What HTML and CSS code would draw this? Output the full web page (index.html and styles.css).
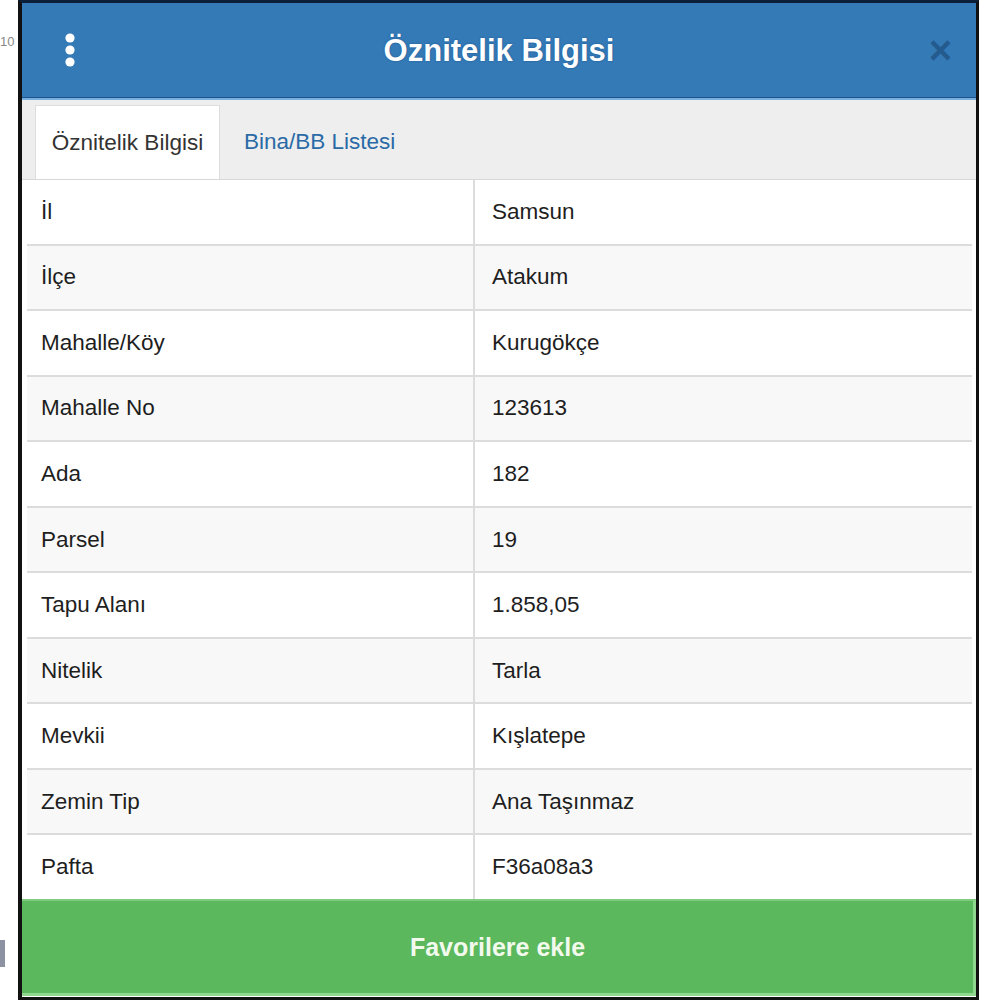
FILE: index.html
```html
<!DOCTYPE html>
<html lang="tr">
<head>
<meta charset="utf-8">
<title>Öznitelik Bilgisi</title>
<link rel="stylesheet" href="styles.css">
</head>
<body>
<div class="page">
  <span class="behind-num">10</span>
  <span class="behind-block"></span>
  <div class="dialog">
    <header class="header">
      <div class="menu">
        <svg width="12" height="36" viewBox="0 0 12 36" aria-hidden="true">
          <circle cx="6" cy="5" r="4.6" fill="#fff"/>
          <circle cx="6" cy="17" r="4.6" fill="#fff"/>
          <circle cx="6" cy="29" r="4.6" fill="#fff"/>
        </svg>
      </div>
      <h1 class="title">Öznitelik Bilgisi</h1>
      <div class="close">×</div>
    </header>
    <nav class="tabs">
      <div class="tab active">Öznitelik Bilgisi</div>
      <div class="tab link">Bina/BB Listesi</div>
    </nav>
    <div class="table">
      <div class="row"><div class="cell key">İl</div><div class="cell val">Samsun</div></div>
      <div class="row"><div class="cell key">İlçe</div><div class="cell val">Atakum</div></div>
      <div class="row"><div class="cell key">Mahalle/Köy</div><div class="cell val">Kurugökçe</div></div>
      <div class="row"><div class="cell key">Mahalle No</div><div class="cell val">123613</div></div>
      <div class="row"><div class="cell key">Ada</div><div class="cell val">182</div></div>
      <div class="row"><div class="cell key">Parsel</div><div class="cell val">19</div></div>
      <div class="row"><div class="cell key">Tapu Alanı</div><div class="cell val">1.858,05</div></div>
      <div class="row"><div class="cell key">Nitelik</div><div class="cell val">Tarla</div></div>
      <div class="row"><div class="cell key">Mevkii</div><div class="cell val">Kışlatepe</div></div>
      <div class="row"><div class="cell key">Zemin Tip</div><div class="cell val">Ana Taşınmaz</div></div>
      <div class="row"><div class="cell key">Pafta</div><div class="cell val">F36a08a3</div></div>
    </div>
    <button class="fav">Favorilere ekle</button>
  </div>
</div>
</body>
</html>
```

FILE: styles.css
```css
* { box-sizing: border-box; }
html, body { margin: 0; padding: 0; background: #fff; }
body { font-family: "Liberation Sans", Arial, sans-serif; color: #222; }

.page { position: relative; width: 1000px; height: 1000px; overflow: hidden; }

.behind-num {
  position: absolute; left: 0; top: 34px;
  font-size: 13px; color: #888;
}
.behind-block {
  position: absolute; left: 0; top: 940px;
  width: 5px; height: 27px; background: #8d92a3;
}

.dialog {
  position: relative;
  margin-left: 18px;
  width: 961px;
  height: 1000px;
  border-left: 4px solid #111;
  border-right: 3px solid #111;
  border-top: 3px solid #0b1f3a;
  border-bottom: 3px solid #111;
  display: flex;
  flex-direction: column;
  background: #fff;
}

.header {
  height: 95px;
  background: #337ab7;
  border-bottom: 1px solid #1f5586;
  display: grid;
  grid-template-columns: 120px 1fr 120px;
  align-items: center;
}
.menu { padding-left: 42px; display: flex; align-items: center; padding-top: 2px; }
.title {
  margin: 0;
  text-align: center;
  color: #fff;
  font-size: 31px;
  font-weight: bold;
  padding-top: 2px;
  text-shadow: 0 0 2px rgba(20, 60, 110, 0.6);
}
.close {
  justify-self: end;
  margin-right: 24px;
  font-size: 40px;
  font-weight: bold;
  line-height: 1;
  color: #1f4f7d;
  opacity: 0.7;
  padding-bottom: 0;
}

.tabs {
  height: 82px;
  background: #eee;
  border-top: 2px solid #78b0e2;
  border-bottom: 1px solid #d8d8d8;
  padding: 5px 5px 0 13px;
  display: flex;
  align-items: stretch;
}
.tab {
  font-size: 22.5px;
  display: flex;
  align-items: center;
}
.tab.active {
  width: 185px;
  justify-content: center;
  background: #fff;
  border: 1px solid #ddd;
  border-bottom: none;
  color: #333;
}
.tab.link {
  padding-left: 24px;
  color: #2a6aa6;
}

.table {
  height: 719px;
  margin: 0 4px 0 5px;
  display: flex;
  flex-direction: column;
}
.row {
  flex: 1;
  display: grid;
  grid-template-columns: 446px 1fr;
  border-top: 2px solid #dcdcdc;
}
.row:first-child { border-top: none; }
.row:nth-child(even) { background: #f8f8f8; }
.cell {
  display: flex;
  align-items: center;
  font-size: 22.5px;
  color: #1e1e1e;
}
.key { padding-left: 14px; }
.val { padding-left: 17px; border-left: 2px solid #dcdcdc; }

.fav {
  height: 97px;
  width: 100%;
  margin: 0;
  background: #5cb85c;
  border: none;
  border-top: 2px solid #7fcb7f;
  border-right: 3px solid #8fd68f;
  border-bottom: 3px solid #8fd68f;
  color: #f2faee;
  font-family: "Liberation Sans", Arial, sans-serif;
  font-size: 25px;
  font-weight: bold;
  padding: 0;
}
```
